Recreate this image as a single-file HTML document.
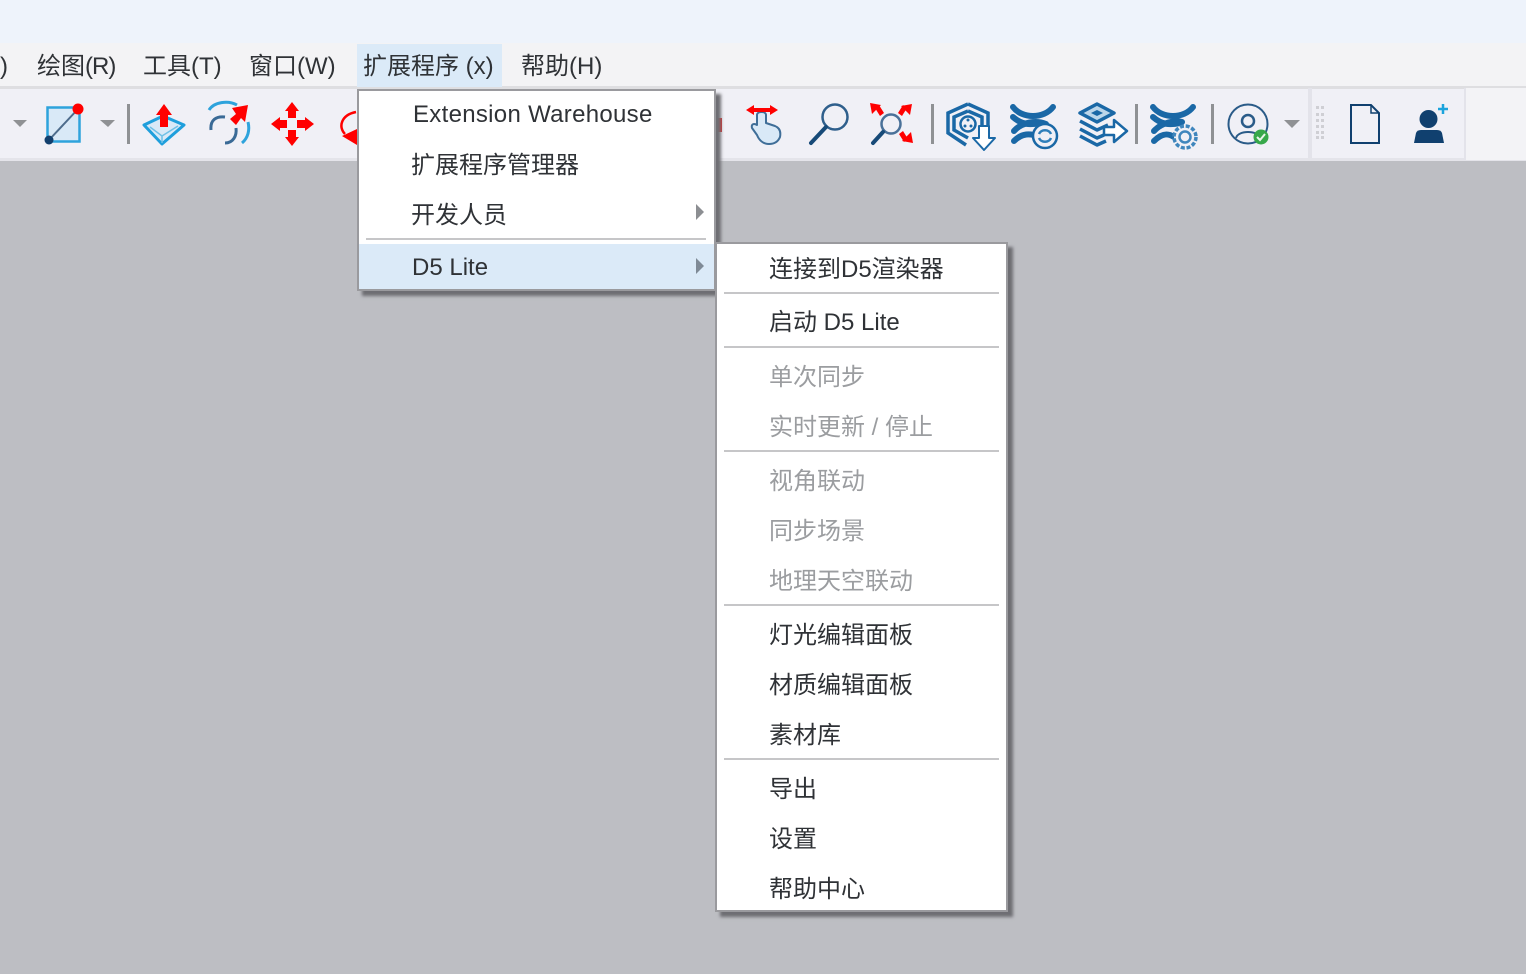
<!DOCTYPE html>
<html lang="zh">
<head>
<meta charset="utf-8">
<title>D5 Lite</title>
<style>
html,body{margin:0;padding:0;width:1526px;height:974px;overflow:hidden;background:#bdbec3}
body{position:relative;font-family:"Liberation Sans","Noto Sans CJK SC",sans-serif;color:#2f3236}
.b{position:absolute}
.t{position:absolute;white-space:nowrap;font-size:24px;line-height:30px;height:30px}
.g{color:#9b9da0}
.sep{position:absolute;height:2px;background:#c6c6c8}
svg{position:absolute;left:0;top:0}
</style>
</head>
<body>
<div class="b" style="left:0;top:0;width:1526px;height:43px;background:#eef3fb"></div>
<div class="b" style="left:0;top:43px;width:1526px;height:43px;background:#f3f3f5"></div>
<div class="b" style="left:0;top:86px;width:1526px;height:3px;background:#dedee1"></div>
<div class="b" style="left:0;top:89px;width:1526px;height:69px;background:#f0f0f6"></div>
<div class="b" style="left:0;top:158px;width:1526px;height:3px;background:#e4e4ea"></div>
<div class="b" style="left:1308px;top:88px;width:4px;height:70px;background:#e3e3ea"></div>
<div class="b" style="left:1464px;top:88px;width:2px;height:72px;background:#e3e3ea"></div>
<div class="b" style="left:1466px;top:88px;width:60px;height:72px;background:#f3f3f6"></div>
<div class="b" style="left:357px;top:44px;width:145px;height:43px;background:#dbeaf8"></div>

<div class="t" style="left:0;top:52px">)</div>
<div class="t" style="left:37px;top:52px">绘图<span style="letter-spacing:-1px">(R)</span></div>
<div class="t" style="left:143px;top:52px">工具(T)</div>
<div class="t" style="left:249px;top:52px">窗口(W)</div>
<div class="t" style="left:363px;top:52px">扩展程序 (x)</div>
<div class="t" style="left:521px;top:52px">帮助(H)</div>

<svg width="1526" height="160" viewBox="0 0 1526 160">
<g fill="#8f9194">
<path d="M13 120h14l-7 7z"/><path d="M100 120h15l-7 7z"/><path d="M1284 120h16l-8 8z"/>
<rect x="127" y="104" width="3" height="40"/><rect x="931" y="104" width="3" height="40"/><rect x="1135" y="104" width="3" height="40"/><rect x="1211" y="104" width="3" height="40"/>
</g>
<rect x="47.500" y="107.500" width="32" height="34" fill="#d9e9f7" stroke="#2ea3dc" stroke-width="2.500"/>
<path d="M49 140L78 109" stroke="#4d6c8c" stroke-width="2"/>
<circle cx="78" cy="109" r="5.500" fill="#f00"/><circle cx="49" cy="140" r="4.500" fill="#123f6d"/>

<path d="M144 125L163 116L184 125L162 144Z" fill="#d9e9f7" stroke="#1f9fdc" stroke-width="3" stroke-linejoin="round"/>
<path d="M150 127L162 136L178 126M162 136V143" fill="none" stroke="#6fc0e6" stroke-width="1.500"/>
<path d="M164 104L172 115H168V127H160V115H156Z" fill="#f00"/>

<path d="M209 110C214 102 228 100 237 105" fill="none" stroke="#2ea3dc" stroke-width="3"/>
<path d="M248 122C250 130 248 138 242 143" fill="none" stroke="#2ea3dc" stroke-width="3"/>
<path d="M211 130C210 120 216 116 225 117" fill="none" stroke="#3a6a96" stroke-width="3"/>
<path d="M236 128C237 136 233 143 225 143" fill="none" stroke="#3a6a96" stroke-width="3"/>
<path d="M248 105L245 122L241 118L236 125L230 119L236 114L232 108Z" fill="#f00"/>

<g fill="#f00">
<path d="M292 102L299 111H296V118H288V111H285Z"/>
<path d="M292 146L299 137H296V130H288V137H285Z"/>
<path d="M271 124L280 117V120H287V128H280V131Z"/>
<path d="M314 124L305 117V120H297V128H305V131Z"/>
</g>
<path d="M345 134C338 127 341 115 356 112" fill="none" stroke="#f00" stroke-width="2.500"/>
<path d="M342 136L357 129V145Z" fill="#f00"/>
<rect x="716" y="118" width="6" height="14" fill="#d83030"/>

<path d="M757 115C757 111 766 111 766 115V123L775 126C780 128 781 132 780 137C778 142 774 144 769 144C763 144 759 140 757 135L752 128C751 124 754 123 757 125Z" fill="#d9e9f7" stroke="#3f6e98" stroke-width="2" stroke-linejoin="round"/>
<path d="M746 110L754 105V108H770V105L778 110L770 115V112H754V115Z" fill="#f00"/>

<circle cx="835" cy="117" r="12.500" fill="none" stroke="#2f5f8c" stroke-width="2.500"/>
<path d="M826 127L811 143" stroke="#174a78" stroke-width="4" stroke-linecap="round"/>

<circle cx="891" cy="124" r="9.500" fill="none" stroke="#4a7199" stroke-width="2.500"/>
<path d="M883 132L873 143" stroke="#174a78" stroke-width="4" stroke-linecap="round"/>
<g fill="#f00">
<path d="M870 103L881 105L872 114Z"/><path d="M875 108L879 105L884 113L880 116Z"/>
<path d="M912 104L901 106L910 115Z"/><path d="M907 108L903 105L898 113L902 116Z"/>
<path d="M913 143L902 141L911 132Z"/><path d="M908 139L904 142L899 134L903 131Z"/>
</g>

<g fill="none" stroke="#1a68a6" stroke-width="3.500">
<path d="M968 104L988 113V131M968 104L948 113V133L966 145"/>
<path d="M968 111L982 117V128M968 111L954 117V130L968 138"/>
</g>
<circle cx="968" cy="124" r="7.500" fill="none" stroke="#1a68a6" stroke-width="2.500"/>
<circle cx="965" cy="126" r="1.500" fill="#1a68a6"/><circle cx="971" cy="126" r="1.500" fill="#1a68a6"/><circle cx="968" cy="120" r="1.500" fill="#1a68a6"/>
<path d="M979 126H989V138H995L984 150L973 138H979Z" fill="#fff" stroke="#1a68a6" stroke-width="2" stroke-linejoin="round"/>

<g fill="none" stroke="#1a68a6" stroke-linecap="round">
<path d="M1013 107C1022 119 1044 119 1053 107" stroke-width="6"/>
<path d="M1013 117C1022 125 1030 125 1040 123" stroke-width="6"/>
<path d="M1014 131C1022 122 1036 120 1046 124" stroke-width="6"/>
<path d="M1014 141C1022 133 1030 133 1040 137" stroke-width="6"/>
</g>
<circle cx="1045" cy="136" r="12" fill="#f0f0f6" stroke="#1a68a6" stroke-width="2.500"/>
<path d="M1039 134C1041 129 1049 129 1051 134M1051 138C1049 143 1041 143 1039 138" fill="none" stroke="#2f7fba" stroke-width="2.500"/>

<g fill="none" stroke="#1a68a6" stroke-width="3.500" stroke-linejoin="round">
<path d="M1097 104L1114 113L1097 122L1080 113Z" fill="#bcd6ea"/>
<path d="M1080 121L1097 130L1108 125"/>
<path d="M1080 129L1097 138L1104 135"/>
<path d="M1080 136L1097 145L1106 141"/>
</g>
<path d="M1091 113L1097 110L1103 113L1097 116Z" fill="#1a68a6"/>
<path d="M1104 127H1114V120L1127 131L1114 142V135H1104Z" fill="#fff" stroke="#1a68a6" stroke-width="2.500" stroke-linejoin="round"/>

<g fill="none" stroke="#1a68a6" stroke-linecap="round">
<path d="M1153 107C1162 119 1184 119 1193 107" stroke-width="6"/>
<path d="M1153 117C1162 125 1170 125 1180 123" stroke-width="6"/>
<path d="M1154 131C1162 122 1176 120 1182 122" stroke-width="6"/>
<path d="M1154 141C1162 133 1168 133 1174 137" stroke-width="6"/>
</g>
<circle cx="1185" cy="137" r="11" fill="#f0f0f6" stroke="#3f86bd" stroke-width="3.500" stroke-dasharray="4 1.800"/>
<circle cx="1185" cy="137" r="5.500" fill="#f0f0f6" stroke="#3f86bd" stroke-width="2.500"/>

<circle cx="1248" cy="124" r="19.500" fill="none" stroke="#2a5b88" stroke-width="2"/>
<circle cx="1248" cy="121" r="6" fill="none" stroke="#2a5b88" stroke-width="2.500"/>
<path d="M1236 138C1238 130 1258 130 1260 138" fill="none" stroke="#2a5b88" stroke-width="2"/>
<circle cx="1261" cy="137" r="7.500" fill="#37a84a"/>
<path d="M1257 137L1260 140L1265 134" fill="none" stroke="#e8f6ea" stroke-width="2"/>

<g fill="#cfcfd4">
<rect x="1316" y="106" width="3" height="3"/><rect x="1321" y="106" width="3" height="3"/>
<rect x="1316" y="113" width="3" height="3"/><rect x="1321" y="113" width="3" height="3"/>
<rect x="1316" y="119" width="3" height="3"/><rect x="1321" y="119" width="3" height="3"/>
<rect x="1316" y="125" width="3" height="3"/><rect x="1321" y="125" width="3" height="3"/>
<rect x="1316" y="131" width="3" height="3"/><rect x="1321" y="131" width="3" height="3"/>
<rect x="1316" y="136" width="3" height="3"/><rect x="1321" y="136" width="3" height="3"/>
</g>
<path d="M1351 105H1371L1379 113V143H1351Z" fill="none" stroke="#10406f" stroke-width="2"/>
<path d="M1371 105V113H1379" fill="none" stroke="#10406f" stroke-width="1.500"/>
<circle cx="1428.500" cy="119" r="9" fill="#10406f"/>
<path d="M1414 143L1416 133Q1417 130 1421 130H1437Q1441 130 1442 133L1444 143Z" fill="#10406f"/>
<path d="M1443 104V114M1438 109H1448" stroke="#1ba3dc" stroke-width="2.500"/>
</svg>

<!-- first menu -->
<div class="b" style="left:357px;top:89px;width:355px;height:198px;background:#fff;border:2px solid #9a9a9e;box-shadow:5px 5px 3px #6e6e73"></div>
<div class="b" style="left:359px;top:244px;width:355px;height:45px;background:#dbeaf8"></div>
<div class="sep" style="left:366px;top:238px;width:340px"></div>
<div class="t" style="left:413px;top:100px;letter-spacing:.3px">Extension Warehouse</div>
<div class="t" style="left:411px;top:151px">扩展程序管理器</div>
<div class="t" style="left:411px;top:201px">开发人员</div>
<div class="t" style="left:412px;top:253px">D5 Lite</div>
<svg width="1526" height="300" viewBox="0 0 1526 300" style="pointer-events:none">
<path d="M696 204L704 212L696 220Z" fill="#8c8e92"/>
<path d="M696 258L704 266L696 274Z" fill="#7f8a96"/>
</svg>

<!-- submenu -->
<div class="b" style="left:715px;top:242px;width:289px;height:666px;background:#fff;border:2px solid #9a9a9e;box-shadow:5px 5px 3px #6e6e73"></div>
<div class="sep" style="left:724px;top:292px;width:275px"></div>
<div class="sep" style="left:724px;top:346px;width:275px"></div>
<div class="sep" style="left:724px;top:450px;width:275px"></div>
<div class="sep" style="left:724px;top:604px;width:275px"></div>
<div class="sep" style="left:724px;top:758px;width:275px"></div>

<div class="t" style="left:769px;top:255px">连接到D5渲染器</div>
<div class="t" style="left:769px;top:308px">启动 D5 Lite</div>
<div class="t g" style="left:769px;top:363px">单次同步</div>
<div class="t g" style="left:769px;top:413px">实时更新 / 停止</div>
<div class="t g" style="left:769px;top:467px">视角联动</div>
<div class="t g" style="left:769px;top:517px">同步场景</div>
<div class="t g" style="left:769px;top:567px">地理天空联动</div>
<div class="t" style="left:769px;top:621px">灯光编辑面板</div>
<div class="t" style="left:769px;top:671px">材质编辑面板</div>
<div class="t" style="left:769px;top:721px">素材库</div>
<div class="t" style="left:769px;top:775px">导出</div>
<div class="t" style="left:769px;top:825px">设置</div>
<div class="t" style="left:769px;top:875px">帮助中心</div>
</body>
</html>
